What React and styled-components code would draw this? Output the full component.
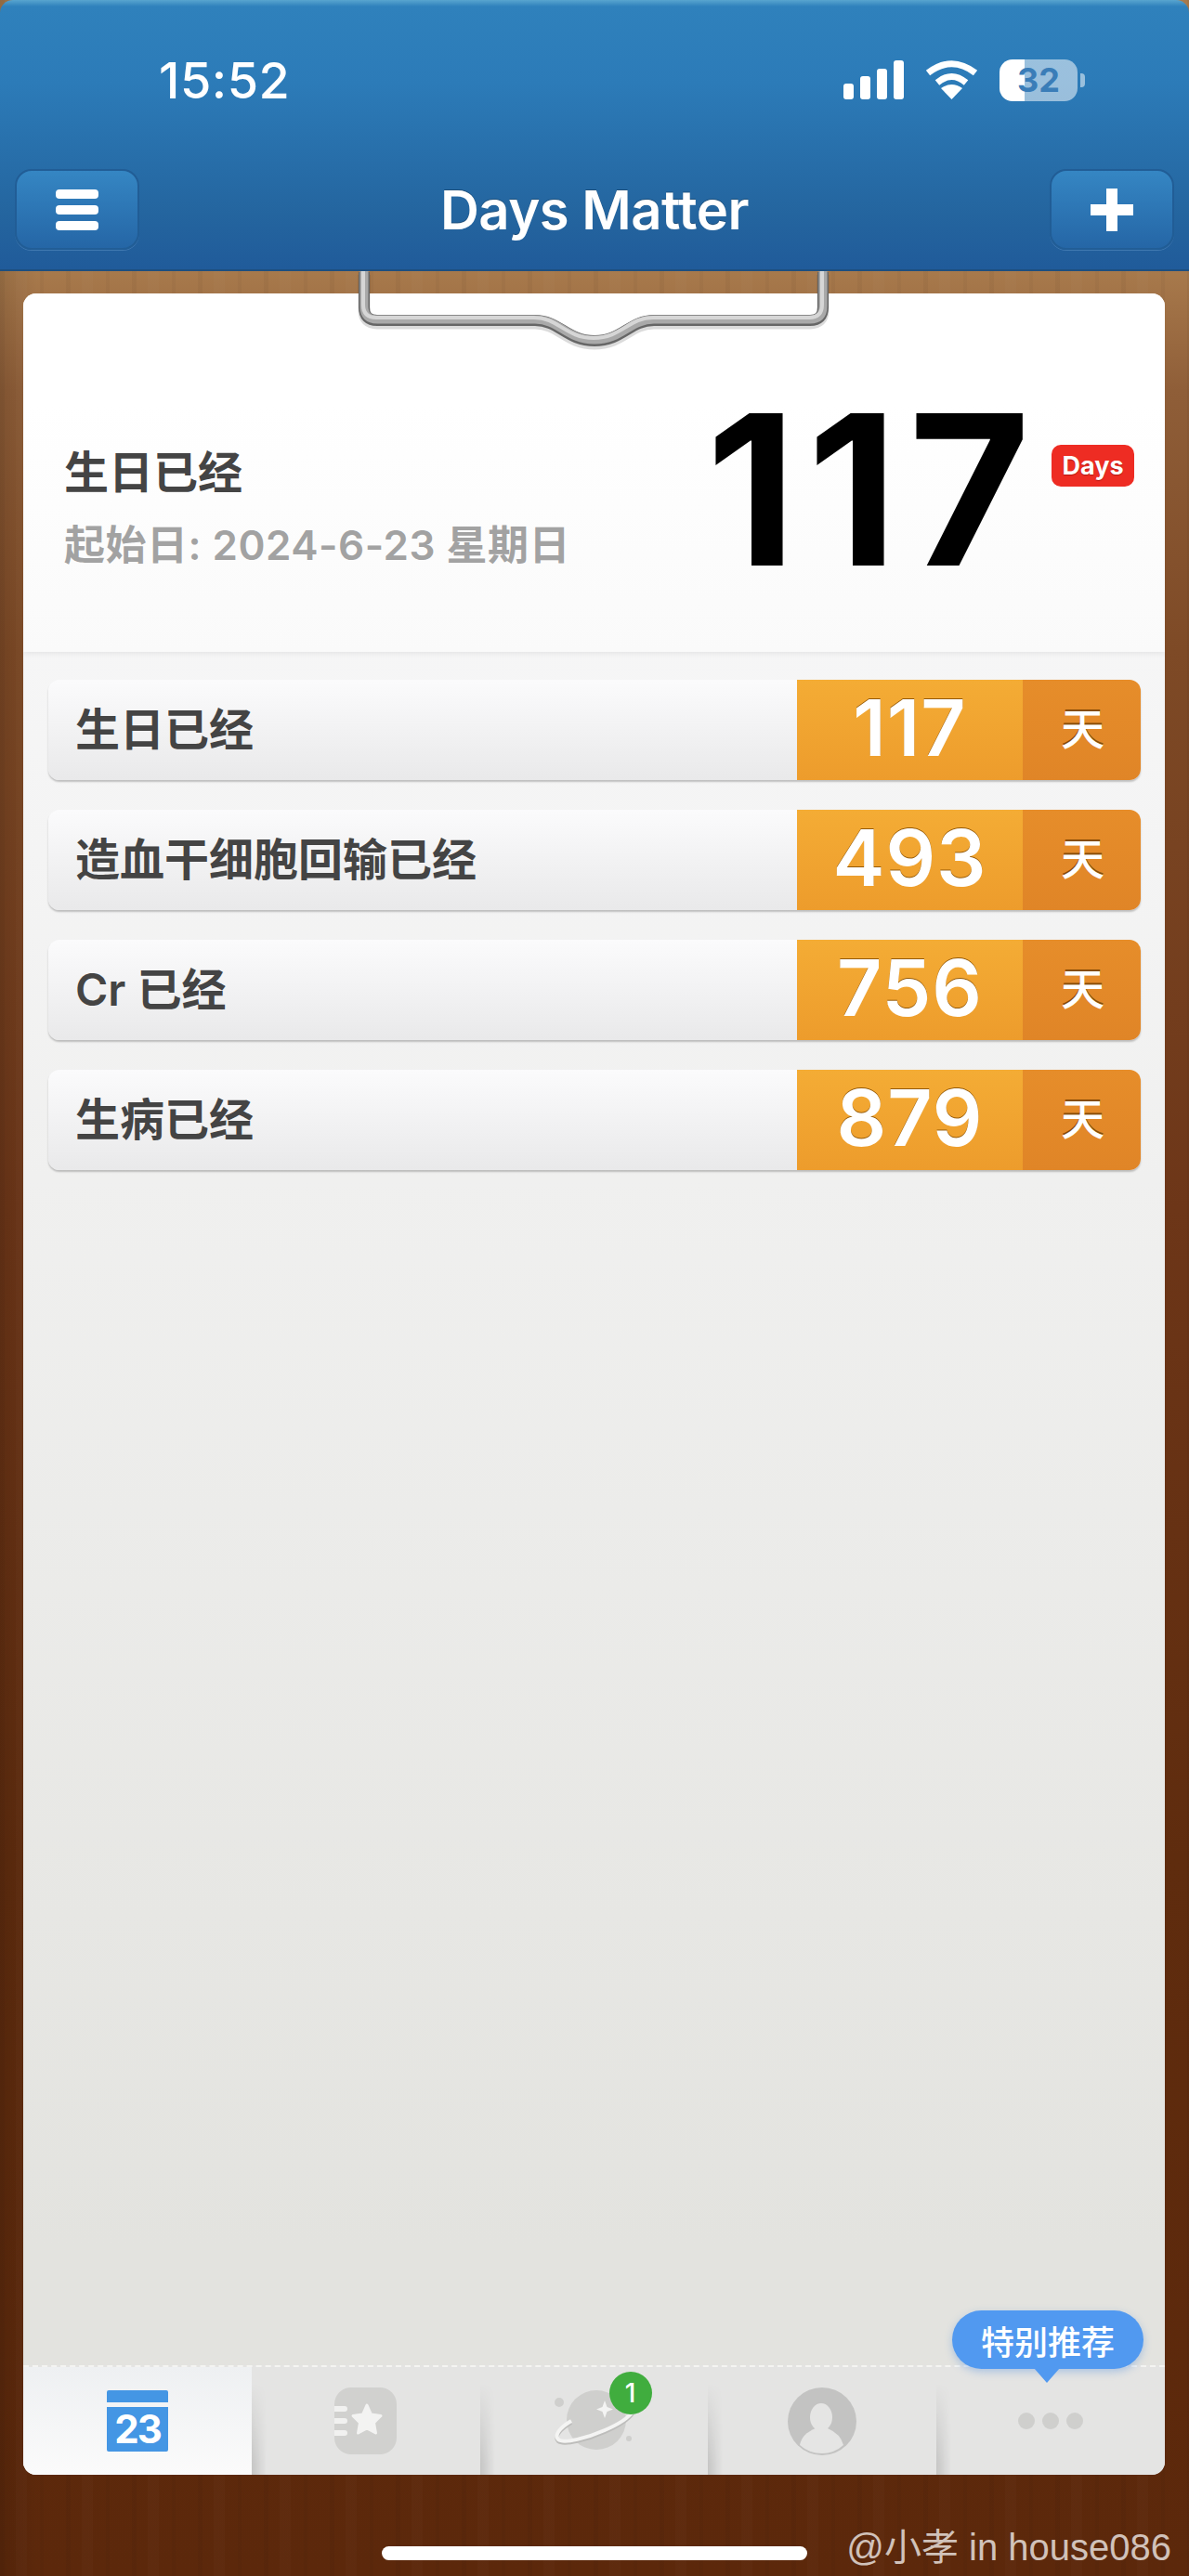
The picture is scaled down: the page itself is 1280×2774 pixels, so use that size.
import React from 'react';
import styled, { createGlobalStyle } from 'styled-components';

const GlobalStyle = createGlobalStyle`
  html, body { margin: 0; padding: 0; }
  body { font-family: Inter, "Noto Sans CJK SC", sans-serif; }
`;

const Page = styled.div`
  position: relative;
  width: 1280px;
  height: 2774px;
  overflow: hidden;
  display: flex;
  flex-direction: column;
  background:
    repeating-linear-gradient(90deg, rgba(0,0,0,.04) 0 5px, transparent 5px 17px, rgba(255,255,255,.015) 17px 29px, transparent 29px 43px, rgba(0,0,0,.03) 43px 47px, transparent 47px 71px),
    linear-gradient(90deg, rgba(0,0,0,.1), transparent 40px),
    linear-gradient(180deg, #a87a4c 290px, #8f5e38 420px, #7e4a26 700px, #6d3618 1300px, #5f2c0e 2000px, #5c280b 2774px);
`;

const Header = styled.header`
  height: 292px;
  flex: none;
  box-sizing: border-box;
  display: flex;
  flex-direction: column;
  background: linear-gradient(180deg, #58a5cf 0, #2f81bc 7px, #2c7bb8 90px, #24659f 230px, #205b9a 290px);
  border-bottom: 2px solid #1d4f80;
  border-radius: 14px 14px 0 0;
`;

const StatusBar = styled.div`
  display: flex;
  justify-content: space-between;
  align-items: center;
  height: 46px;
  margin-top: 63px;
  padding: 0 120px 0 171px;
`;

const Clock = styled.span`
  color: #fff;
  font-size: 54px;
  font-weight: 500;
  letter-spacing: .5px;
`;

const StatusIcons = styled.div`
  display: flex;
  align-items: center;
  gap: 23px;
`;

const Battery = styled.div`
  position: relative;
  width: 84px;
  height: 45px;
  border-radius: 14px;
  background: linear-gradient(90deg, #fff 32%, rgba(255,255,255,.52) 32%);
  display: flex;
  align-items: center;
  justify-content: center;
  color: #3a7db8;
  font-size: 36px;
  font-weight: 700;
  &::after {
    content: "";
    position: absolute;
    right: -8px;
    top: 15px;
    width: 5px;
    height: 15px;
    border-radius: 0 4px 4px 0;
    background: rgba(255,255,255,.52);
  }
`;

const NavBar = styled.nav`
  display: flex;
  justify-content: space-between;
  align-items: center;
  margin-top: 73px;
  padding: 0 16px;
`;

const NavButton = styled.button`
  width: 134px;
  height: 87px;
  padding: 0;
  display: flex;
  flex-direction: column;
  align-items: center;
  justify-content: center;
  gap: 7px;
  border: 2px solid #215d96;
  border-radius: 18px;
  background: linear-gradient(180deg, #3586c3, #2566a6);
  box-shadow: 0 1px 0 rgba(120,170,215,.35);
`;

const MenuLine = styled.span`
  width: 46px;
  height: 10px;
  border-radius: 4px;
  background: #fff;
`;

const Title = styled.h1`
  margin: 0;
  color: #fff;
  font-size: 58px;
  font-weight: 600;
  letter-spacing: -.5px;
  text-shadow: 0 -1px 0 rgba(0,0,0,.25);
`;

const Clip = styled.svg`
  position: absolute;
  top: 292px;
  left: 376px;
  width: 528px;
  height: 90px;
`;

const Card = styled.main`
  flex: none;
  height: 2349px;
  margin: 24px 26px 0 25px;
  display: flex;
  flex-direction: column;
  overflow: hidden;
  border-radius: 14px;
  background: linear-gradient(180deg, #f9f9fa 0, #f4f4f4 600px, #e3e3df 2100px);
`;

const Hero = styled.section`
  flex: none;
  height: 386px;
  box-sizing: border-box;
  padding: 112px 33px 0 44px;
  display: flex;
  align-items: flex-start;
  background: linear-gradient(180deg, #fff 0, #fff 120px, #fafafa 386px);
  box-shadow: 0 2px 6px rgba(0,0,0,.07);
`;

const HeroText = styled.div`
  margin-top: 50px;
  display: flex;
  flex-direction: column;
  gap: 19px;
`;

const HeroName = styled.div`
  color: #444;
  font-size: 48px;
  line-height: 62px;
  font-weight: 600;
`;

const HeroDate = styled.div`
  color: #a2a2a2;
  font-size: 44px;
  line-height: 56px;
  font-weight: 600;
  letter-spacing: .5px;
`;

const HeroCount = styled.div`
  margin: -33px -12px 0 auto;
  color: #000;
  font-size: 225px;
  line-height: 264px;
  font-weight: 700;
  letter-spacing: 12px;
`;

const DaysBadge = styled.div`
  margin: 51px 0 0 23px;
  width: 89px;
  height: 45px;
  border-radius: 10px;
  background: #ee2c23;
  color: #fff;
  font-size: 27px;
  font-weight: 700;
  display: flex;
  align-items: center;
  justify-content: center;
  text-shadow: 0 1px 1px rgba(120,0,0,.5);
`;

const List = styled.ul`
  list-style: none;
  margin: 0;
  padding: 30px 26px 0 27px;
  display: flex;
  flex-direction: column;
  gap: 32px;
  flex: 1;
`;

const Row = styled.li`
  height: 108px;
  display: flex;
  border-radius: 12px;
  overflow: hidden;
  background: linear-gradient(180deg, #fbfbfc, #e9e9ea);
  box-shadow: 0 2px 2px rgba(0,0,0,.22);
`;

const RowName = styled.div`
  flex: 1;
  padding: 0 0 9px 29px;
  display: flex;
  align-items: center;
  color: #444;
  font-size: 48px;
  font-weight: 600;
`;

const RowCount = styled.div`
  width: 243px;
  padding-bottom: 5px;
  box-sizing: border-box;
  display: flex;
  align-items: center;
  justify-content: center;
  background: linear-gradient(180deg, #f4ac35, #ed9c2c);
  color: #fff;
  font-size: 84px;
  font-weight: 600;
  letter-spacing: 1px;
  text-shadow: 0 -1px 0 rgba(130,75,0,.85);
`;

const RowUnit = styled.div`
  width: 127px;
  padding: 0 0 9px 2px;
  box-sizing: border-box;
  display: flex;
  align-items: center;
  justify-content: center;
  background: linear-gradient(180deg, #e68d2a, #e08527);
  color: #fff;
  font-size: 47px;
  font-weight: 500;
  text-shadow: 0 -2px 0 rgba(110,60,0,.8);
`;

const TabBar = styled.div`
  flex: none;
  height: 116px;
  display: grid;
  grid-template-columns: repeat(5, 1fr);
  border-top: 2px dashed #f4f4f2;
  background: #e4e4e3;
`;

const Tab = styled.div`
  position: relative;
  display: flex;
  align-items: center;
  justify-content: center;
  background: ${p => p.$active ? 'linear-gradient(180deg, #eef0f2, #fbfbfb)' : 'none'};
  &::before {
    content: "";
    display: ${p => p.$active ? 'none' : 'block'};
    position: absolute;
    inset: 0 auto 0 0;
    width: 16px;
    background: linear-gradient(90deg, rgba(0,0,0,.13), transparent);
    mask-image: linear-gradient(180deg, transparent 15%, #000 90%);
  }
`;

const MoreDots = styled.div`
  display: flex;
  gap: 8px;
`;

const Dot = styled.span`
  width: 18px;
  height: 18px;
  border-radius: 50%;
  background: #cfcfcd;
`;

const TabBadge = styled.div`
  position: absolute;
  top: 5px;
  left: 139px;
  width: 46px;
  height: 46px;
  border-radius: 50%;
  background: #40ad3e;
  color: #fff;
  font-size: 28px;
  font-weight: 500;
  display: flex;
  align-items: center;
  justify-content: center;
`;

const Tooltip = styled.div`
  position: absolute;
  top: 2488px;
  left: 1025px;
  width: 206px;
  height: 63px;
  border-radius: 32px;
  background: #5199f0;
  color: #fff;
  font-size: 36px;
  font-weight: 500;
  display: flex;
  align-items: center;
  justify-content: center;
  box-shadow: 0 3px 8px rgba(60,130,220,.35);
  &::after {
    content: "";
    position: absolute;
    left: 88px;
    top: 62px;
    border-left: 14px solid transparent;
    border-right: 14px solid transparent;
    border-top: 16px solid #5199f0;
  }
`;

const Footer = styled.footer`
  flex: 1;
  display: grid;
  grid-template-columns: 1fr 458px 1fr;
  align-items: center;
  padding-top: 46px;
`;

const HomeBar = styled.div`
  grid-column: 2;
  height: 15px;
  border-radius: 8px;
  background: #fff;
`;

const Watermark = styled.div`
  justify-self: end;
  margin: 0 19px 18px 0;
  color: rgba(255,255,255,.72);
  font-family: "Liberation Sans", "Noto Sans CJK SC", sans-serif;
  font-size: 40px;
  white-space: nowrap;
`;

const rows = [
  { name: '生日已经', count: 117 },
  { name: '造血干细胞回输已经', count: 493 },
  { name: 'Cr 已经', count: 756 },
  { name: '生病已经', count: 879 },
];

const SignalIcon = () => (
  <svg width="65" height="42" viewBox="0 0 65 42" fill="#fff">
    <rect x="0" y="25" width="11" height="17" rx="3" />
    <rect x="18" y="17" width="11" height="25" rx="3" />
    <rect x="36" y="9" width="11" height="33" rx="3" />
    <rect x="54" y="0" width="11" height="42" rx="3" />
  </svg>
);

const WifiIcon = () => (
  <svg width="57" height="42" viewBox="0 0 57 42" fill="none" stroke="#fff" strokeWidth="7">
    <path d="M3 13.5 Q28.5 -6 54 13.5" />
    <path d="M13 24 Q28.5 11 44 24" />
    <path d="M28.5 42 L17 30 Q28.5 22 40 30 Z" fill="#fff" stroke="none" />
  </svg>
);

const clipPath = 'M16 0 V38 Q16 52 30 52 H200 C226 52 234 74 264 74 C294 74 302 52 328 52 H496 Q510 52 510 38 V0';

const CalendarIcon = () => (
  <svg width="66" height="66" viewBox="0 0 66 66">
    <path d="M2 0 H64 a2 2 0 0 1 2 2 V13 H0 V2 a2 2 0 0 1 2 -2 Z" fill="#4496e4" />
    <path d="M0 18 H66 V64 a2 2 0 0 1 -2 2 H2 a2 2 0 0 1 -2 -2 Z" fill="#4496e4" />
    <text x="33" y="57" textAnchor="middle" fill="#fff" fontFamily="Inter, sans-serif" fontSize="42" fontWeight="700" letterSpacing="-2">23</text>
  </svg>
);

const NotebookIcon = () => (
  <svg width="67" height="72" viewBox="0 0 67 72">
    <rect width="67" height="72" rx="18" fill="#d1d1cf" />
    <rect x="-4" y="20" width="18" height="6" rx="3" fill="#f1f1f0" />
    <rect x="-4" y="33" width="18" height="6" rx="3" fill="#f1f1f0" />
    <rect x="-4" y="46" width="18" height="6" rx="3" fill="#f1f1f0" />
    <path d="M35 19 L39.5 29 L50 30.5 L42.5 38 L44.5 49 L35 44 L25.5 49 L27.5 38 L20 30.5 L30.5 29 Z" fill="#f3f3f2" stroke="#f3f3f2" strokeWidth="3" strokeLinejoin="round" />
  </svg>
);

const PlanetIcon = () => (
  <svg width="92" height="72" viewBox="0 0 92 72" fill="none">
    <circle cx="49" cy="35" r="32" fill="#cfcfcd" />
    <circle cx="9" cy="16" r="5" fill="#cfcfcd" />
    <circle cx="84" cy="55" r="3" fill="#cfcfcd" />
    <path d="M22 36 C8 44 4 52 8 56 C14 61 40 54 58 46 C72 40 84 32 88 26" stroke="#bdbdbb" strokeWidth="4" transform="translate(0 2)" />
    <path d="M22 36 C8 44 4 52 8 56 C14 61 40 54 58 46 C72 40 84 32 88 26" stroke="#f4f4f3" strokeWidth="4" />
    <path d="M58 14 L60.5 21 L67 23.5 L60.5 26 L58 33 L55.5 26 L49 23.5 L55.5 21 Z" fill="#f4f4f3" />
  </svg>
);

const PersonIcon = () => (
  <svg width="74" height="73" viewBox="0 0 74 73">
    <ellipse cx="37" cy="36.5" rx="37" ry="36.5" fill="#c3c3c2" />
    <ellipse cx="36" cy="32" rx="12" ry="15" fill="#e5e5e4" />
    <path d="M13 62 Q15 50 30 44 H43 Q57 50 60 62 Q50 71 37 71 Q23 71 13 62 Z" fill="#e5e5e4" />
  </svg>
);

const App = () => {
  return (
    <Page>
      <GlobalStyle />
      <Header>
        <StatusBar>
          <Clock>15:52</Clock>
          <StatusIcons>
            <SignalIcon />
            <WifiIcon />
            <Battery>32</Battery>
          </StatusIcons>
        </StatusBar>
        <NavBar>
          <NavButton aria-label="menu">
            <MenuLine />
            <MenuLine />
            <MenuLine />
          </NavButton>
          <Title>Days Matter</Title>
          <NavButton aria-label="add">
            <svg width="46" height="46" viewBox="0 0 46 46" fill="#fff">
              <rect x="17" width="12" height="46" />
              <rect y="17" width="46" height="12" />
            </svg>
          </NavButton>
        </NavBar>
      </Header>

      <Clip viewBox="0 0 528 90" fill="none">
        <path d={clipPath} stroke="#000" strokeOpacity=".14" strokeWidth="13" transform="translate(0 4)" />
        <path d={clipPath} stroke="#666" strokeWidth="12" transform="translate(0 1)" />
        <path d={clipPath} stroke="#a9a9a9" strokeWidth="9" />
        <path d={clipPath} stroke="#d6d6d6" strokeWidth="4" transform="translate(-1 -2)" />
      </Clip>

      <Card>
        <Hero>
          <HeroText>
            <HeroName>生日已经</HeroName>
            <HeroDate>起始日: 2024-6-23 星期日</HeroDate>
          </HeroText>
          <HeroCount>117</HeroCount>
          <DaysBadge>Days</DaysBadge>
        </Hero>
        <List>
          {rows.map(row => (
            <Row key={row.name}>
              <RowName>{row.name}</RowName>
              <RowCount>{row.count}</RowCount>
              <RowUnit>天</RowUnit>
            </Row>
          ))}
        </List>
        <TabBar>
          <Tab $active><CalendarIcon /></Tab>
          <Tab><NotebookIcon /></Tab>
          <Tab>
            <PlanetIcon />
            <TabBadge>1</TabBadge>
          </Tab>
          <Tab><PersonIcon /></Tab>
          <Tab>
            <MoreDots>
              <Dot />
              <Dot />
              <Dot />
            </MoreDots>
          </Tab>
        </TabBar>
      </Card>

      <Tooltip>特别推荐</Tooltip>

      <Footer>
        <HomeBar />
        <Watermark>@小孝 in house086</Watermark>
      </Footer>
    </Page>
  );
};

export default App;
